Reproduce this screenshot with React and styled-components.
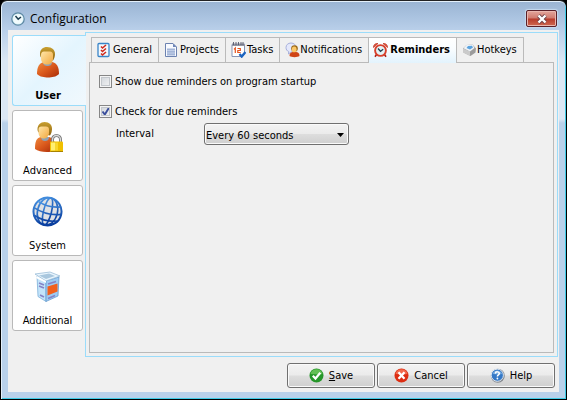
import React, { useState } from 'react';
import styled, { createGlobalStyle, css } from 'styled-components';

const GlobalStyle = createGlobalStyle`
  * {
    box-sizing: border-box;
  }

  body {
    margin: 0;
    background: #000;
    color: #000;
    font-family: 'DejaVu Sans Condensed', 'Noto Sans', sans-serif;
    font-size: 11px;
  }

  button,
  select {
    font: inherit;
    color: inherit;
  }
`;

/* ---------- icons ---------- */

const PersonDefs = ({ id }) => (
  <defs>
    <linearGradient id={`${id}-body`} x1="0" y1="0" x2="1" y2="1">
      <stop offset="0" stopColor="#f08a3c" />
      <stop offset="0.5" stopColor="#d9581c" />
      <stop offset="1" stopColor="#a82c08" />
    </linearGradient>
    <linearGradient id={`${id}-face`} x1="0" y1="0" x2="1" y2="1">
      <stop offset="0" stopColor="#ffe6a8" />
      <stop offset="1" stopColor="#f2a83e" />
    </linearGradient>
    <linearGradient id={`${id}-hair`} x1="0" y1="0" x2="0" y2="1">
      <stop offset="0" stopColor="#c9a030" />
      <stop offset="1" stopColor="#8f6410" />
    </linearGradient>
  </defs>
);

const UserIcon = () => (
  <svg width="32" height="32" viewBox="0 0 32 32" aria-hidden="true">
    <PersonDefs id="user" />
    <path d="M5 28c0-7 2-11 7-12h8c5 1 7 5 7 12-3 3-7 3.400-11 3.400S8 31 5 28z" fill="url(#user-body)" />
    <path d="M11 16h9c0 3-2 4-4.500 4S11 19 11 16z" fill="#8fa3b4" />
    <path d="M8 7.500C8 3.500 11 1 15 1c5 0 8 3 8 7 0 3-1 5-2 6.500L10 12.500C8.500 11.500 8 9.500 8 7.500z" fill="url(#user-hair)" />
    <path d="M9 9c0-2 1-3.500 3-3.500h6c2 0 3 1.500 3 3.500v3c0 4-2 6.500-6 6.500S9 16 9 12z" fill="url(#user-face)" />
  </svg>
);

const AdvancedIcon = () => (
  <svg width="32" height="32" viewBox="0 0 32 32" aria-hidden="true">
    <PersonDefs id="adv" />
    <path d="M3 28c0-7 1-11 6-12h8c4 1 6 4 6 9v5c-6 1.500-16 1.500-20-2z" fill="url(#adv-body)" />
    <path d="M9 16h8c0 3-2 4-4 4s-4-1-4-4z" fill="#8fa3b4" />
    <path d="M5.500 8c0-4 3-7 7-7 5 0 7.500 3 7.500 7 0 3-1 5-2 6.500L7.500 12C6 11 5.500 10 5.500 8z" fill="url(#adv-hair)" />
    <path d="M6.500 8.500c0-2 1-3 3-3h4.500c2 0 3 1 3 3V11c0 4-2 6.500-5.300 6.500S6.500 15 6.500 11z" fill="url(#adv-face)" />
    <path d="M20.500 22v-3.500a4 4 0 0 1 8 0V22" fill="none" stroke="#777" strokeWidth="3" />
    <path d="M20.500 22v-3.500a4 4 0 0 1 8 0V22" fill="none" stroke="#d8d8d8" strokeWidth="1.300" />
    <rect x="18" y="20.500" width="13" height="10.500" rx="1" fill="#f0c000" />
    <path d="M19 21.500h4v8h-4z" fill="#ffef70" />
    <path d="M23 21.500h3v8h-3z" fill="#f9d72c" />
    <path d="M18 30h13v1H19z" fill="#a88200" />
  </svg>
);

const GlobeIcon = () => (
  <svg width="32" height="32" viewBox="0 0 32 32" aria-hidden="true">
    <defs>
      <linearGradient id="globe-line" x1="0" y1="0" x2="0.6" y2="1">
        <stop offset="0" stopColor="#4c9ae8" />
        <stop offset="1" stopColor="#0a3fa0" />
      </linearGradient>
    </defs>
    <circle cx="15.500" cy="15.500" r="14" fill="#dfe1e4" />
    <g fill="none" stroke="url(#globe-line)" strokeWidth="1.600" transform="rotate(14 15.500 15.500)">
      <circle cx="15.500" cy="15.500" r="14" strokeWidth="2" />
      <ellipse cx="15.500" cy="15.500" rx="4" ry="14" />
      <ellipse cx="15.500" cy="15.500" rx="10" ry="14" />
      <path d="M4 8q11.500 4 23 0M1.500 15q14 5 28 0M4 22.500q11.500 4 23 0" />
    </g>
    <path d="M4 24c6 5 17 5 23 0-5 7-18 7-23 0z" fill="#0a3fa0" />
  </svg>
);

const BoxIcon = () => (
  <svg width="32" height="32" viewBox="0 0 32 32" aria-hidden="true">
    <path d="M5 5l9 5v20.500l-8-5z" fill="#c3e4fa" stroke="#6fa6d4" strokeWidth=".7" />
    <path d="M14 10l13-4-1 19-12 5.500z" fill="#9dcbf2" stroke="#5d93c8" strokeWidth=".7" />
    <path d="M3 3l15-2 10 4-14 5z" fill="#e9f5fd" stroke="#8fb4d2" strokeWidth=".7" />
    <path d="M7 4.500l10-2 6 2.500-9 3z" fill="#a9c7de" />
    <path d="M5 5l9 5v2L4 7z" fill="#fff" />
    <path d="M15.500 15.500l10-3v8l-10 4z" fill="#f2601c" />
    <path d="M16 13l8-2.500M7 12l5 2M7 15l5 2M8 24l4 2M16 27.500l7-3" stroke="#8583c6" strokeWidth="1.800" />
  </svg>
);

const ClockIcon = () => (
  <svg width="14" height="14" viewBox="0 0 14 14" aria-hidden="true">
    <circle cx="7" cy="7" r="6.200" fill="#d9f1f8" stroke="#5d88a3" strokeWidth="1.200" />
    <circle cx="7" cy="7" r="4.800" fill="#f2fbfd" />
    <path d="M4.500 4l2.700 3.200L10 5" fill="none" stroke="#1d3d50" strokeWidth="1.500" />
  </svg>
);

const ChecklistIcon = () => (
  <svg width="14" height="16" viewBox="0 0 14 16" aria-hidden="true">
    <rect x="1" y="1.500" width="11" height="13" rx="1" fill="#f3f8fd" stroke="#3a85c8" strokeWidth="1.300" />
    <path d="M4 4.500L5.500 6 9 3M4 8l1.500 1.500L9 6.500M4 11.500L5.500 13 9 10" fill="none" stroke="#d02a1c" strokeWidth="1.600" />
  </svg>
);

const DocumentIcon = () => (
  <svg width="14" height="16" viewBox="0 0 14 16" aria-hidden="true">
    <path d="M1.500 1.500h7.500l3.500 3.500v9.500h-11z" fill="#f8faff" stroke="#6c82b0" />
    <path d="M9 1.500V5h3.500z" fill="#6e86b8" />
    <path d="M3 6.500h8v7H3z" fill="#a4b6d8" />
    <path d="M3 8.500h8M3 11h8" stroke="#c2cfe8" />
  </svg>
);

const CalendarIcon = () => (
  <svg width="15" height="16" viewBox="0 0 15 16" aria-hidden="true">
    <path d="M1 2.500h12.500v10l-2 2H1z" fill="#fff" stroke="#8794b4" />
    <path d="M1 1.500h12.500V4H1z" fill="#9295a4" />
    <path d="M2.500 0v3M5 0v3M7.500 0v3M10 0v3M12 0v3" stroke="#555a6c" strokeWidth=".9" />
    <path d="M3 7.300L4.300 6v5M6.500 6.500h2.800v2H6.800v2h2.900" fill="none" stroke="#e5531c" strokeWidth="1.200" />
    <path d="M8.500 12l2.200 2.600L14.500 10" fill="none" stroke="#1c64c0" strokeWidth="2.300" />
  </svg>
);

const NotifyIcon = () => (
  <svg width="15" height="16" viewBox="0 0 15 16" aria-hidden="true">
    <path d="M1 5.500C1 3 3 1 6 1s5 2 5 4.500S9 10 6 10l-2.500 2 .2-2.500C2 9 1 7.500 1 5.500z" fill="#e4e8fb" stroke="#a7b0dc" />
    <path d="M4.500 14c0-3 1.500-4 3.500-4h3c2 0 3.500 1 3.500 4-2 1.500-8 1.500-10 0z" fill="#cf4416" />
    <circle cx="9.500" cy="6.500" r="3.300" fill="#9c6a18" />
    <ellipse cx="9.200" cy="7.400" rx="2.400" ry="2.900" fill="#fbc767" />
  </svg>
);

const AlarmIcon = () => (
  <svg width="15" height="16" viewBox="0 0 15 16" aria-hidden="true">
    <path d="M3.500 12.500L2 14.800M11.500 12.500l1.500 2.300" stroke="#a82418" strokeWidth="1.600" />
    <path d="M.5 5.500C.3 3 2 1.200 5 1.500zM14.500 5.500c.2-2.500-1.500-4.300-4.500-4z" fill="#e8563c" stroke="#b92e1c" strokeWidth=".7" />
    <circle cx="7.500" cy="8.500" r="5.400" fill="#e3f3f6" stroke="#d8402c" strokeWidth="1.900" />
    <path d="M5 6.500l2.500 2.800 2.700-2" fill="none" stroke="#24414e" strokeWidth="1.300" />
  </svg>
);

const KeyIcon = () => (
  <svg width="15" height="16" viewBox="0 0 15 16" aria-hidden="true">
    <path d="M4.500 3l6-.5 3.500 4-.5 4-5 3.500-7-3.500-.5-4z" fill="#9b9b9b" />
    <path d="M1 6.500l7 3v4.500l-7-3.500z" fill="#cacaca" />
    <path d="M4.500 3l6-.5L12.500 6 8 9.500 1.500 6.300z" fill="#eff3f7" />
    <path d="M6 4l4-.3L11 5.500 8 7.500 4.500 6z" fill="#5aa2de" />
  </svg>
);

const SaveIcon = () => (
  <svg width="15" height="15" viewBox="0 0 15 15" aria-hidden="true">
    <circle cx="7.500" cy="7.500" r="7" fill="#26962a" />
    <path d="M1.500 6a6.200 6.200 0 0 1 12 0c-3 1-8 0-12 0z" fill="#62bf55" />
    <path d="M3.800 7.700l2.700 2.800 4.800-5.700" fill="none" stroke="#fff" strokeWidth="2.200" />
  </svg>
);

const CancelIcon = () => (
  <svg width="15" height="15" viewBox="0 0 15 15" aria-hidden="true">
    <circle cx="7.500" cy="7.500" r="7" fill="#dc2d12" />
    <path d="M1.500 6a6.200 6.200 0 0 1 12 0c-3 1-8 0-12 0z" fill="#f2694c" />
    <path d="M4.500 4.300l6 6.400M10.500 4.300l-6 6.400" stroke="#fff" strokeWidth="2.300" />
  </svg>
);

const HelpIcon = () => (
  <svg width="15" height="15" viewBox="0 0 15 15" aria-hidden="true">
    <circle cx="7.800" cy="7.800" r="7" fill="#85898f" />
    <circle cx="7.300" cy="7.200" r="6.100" fill="#3578c6" stroke="#dfe8f2" />
    <path d="M2.500 6a5 5 0 0 1 9.600 0c-3 1-6 0-9.600 0z" fill="#75abe2" />
    <path d="M5.300 5.600c.2-2.400 4-2.200 4 0 0 1.400-1.900 1.300-1.900 3" fill="none" stroke="#fff" strokeWidth="1.500" />
    <circle cx="7.400" cy="10.500" r=".9" fill="#fff" />
  </svg>
);

const CloseIcon = () => (
  <svg width="12" height="10" viewBox="0 0 12 10" aria-hidden="true">
    <path d="M2.500 1.500l7 7M9.500 1.500l-7 7" stroke="#6b4248" strokeWidth="4" />
    <path d="M2.500 1.500l7 7M9.500 1.500l-7 7" stroke="#fff" strokeWidth="2.400" />
  </svg>
);

/* ---------- window frame ---------- */

const Window = styled.div`
  display: flex;
  flex-direction: column;
  min-height: 100vh;
  padding: 0 7px 7px;
  border: 1px solid #000;
  border-top-color: #222;
  border-radius: 7px 7px 0 0;
  background: linear-gradient(#9ab4d2, #a9c2df 15px, #bad0ea 30px, #dbe7f4 60px, #dbe7f4 118px, #b9d1ea 122px);
  box-shadow: inset 1px 0 #e4f0fa, inset 0 1px #e4f0fa, inset -1px -1px #3fcbe6;
`;

const TitleBar = styled.header`
  display: flex;
  align-items: center;
  gap: 5px;
  height: 29px;
  padding: 6px 2px 0 3px;
`;

const Title = styled.h1`
  flex: 1;
  margin: 0;
  font-family: 'Open Sans', 'Noto Sans', sans-serif;
  font-size: 12px;
  font-weight: 400;
`;

const CloseButton = styled.button`
  display: flex;
  align-items: center;
  justify-content: center;
  width: 31px;
  height: 17px;
  padding: 0;
  border: 1px solid #5b2028;
  border-radius: 2px;
  background: linear-gradient(#e3a69c, #d07a6e 48%, #b73a2a 52%, #cf6a52);
  box-shadow: inset 0 0 0 1px #e9b6ae, 0 0 1px 1px #c6daee;
`;

const Client = styled.div`
  flex: 1;
  display: flex;
  flex-direction: column;
  background: #f0f0f0;
`;

const Main = styled.main`
  flex: 1;
  display: flex;
  padding: 2px 1px 0 4px;
`;

/* ---------- left navigation ---------- */

const Sidebar = styled.nav`
  display: flex;
  flex-direction: column;
  gap: 4px;
  width: 73px;
  padding-top: 3px;
`;

const NavButton = styled.button`
  display: flex;
  flex-direction: column;
  align-items: center;
  gap: 10px;
  width: 71px;
  height: 71px;
  padding: 10px 0 0;
  border: 1px solid #b9b9b9;
  border-radius: 3px;
  background: #fff;
  line-height: 16px;

  ${({ $active }) =>
    $active &&
    css`
      position: relative;
      width: 74px;
      padding-right: 3px;
      border-color: #9bdcfa;
      border-right: 0;
      border-radius: 3px 0 0 3px;
      background: linear-gradient(135deg, #fff, #e4f5fe 50%, #f1f8fd);
      font-weight: 700;
    `}
`;

/* ---------- tabs ---------- */

const Content = styled.section`
  flex: 1;
  display: flex;
  flex-direction: column;
  padding: 4px 3px 3px;
  border: 1px solid #9bdcfa;
`;

const TabList = styled.div`
  display: flex;
  padding-left: 2px;
`;

const Tab = styled.button`
  display: flex;
  align-items: center;
  gap: ${({ $gap }) => $gap}px;
  height: 25px;
  padding: 0 6px 1px 5px;
  border: 1px solid #bababa;
  border-width: 1px 0 0 1px;
  background: #f0f0f0;
  white-space: nowrap;

  &:last-child {
    border-right-width: 1px;
  }

  ${({ $active }) =>
    $active &&
    css`
      position: relative;
      margin-bottom: -1px;
      height: 26px;
      padding: 0 6px 2px 4px;
      background: linear-gradient(#fff, #fafdff 40%, #e3f3fd);
      font-weight: 700;
    `}
`;

const TabPanel = styled.div`
  flex: 1;
  padding: 10px 9px;
  border: 1px solid #bababa;
`;

/* ---------- form ---------- */

const CheckRow = styled.label`
  display: flex;
  align-items: center;
  gap: 3px;
  height: 16px;
  margin-bottom: 14px;
`;

const Checkbox = styled.input`
  appearance: none;
  width: 13px;
  height: 13px;
  margin: 0;
  border: 1px solid #868686;
  background: linear-gradient(135deg, #cdd2d8, #f6f6f6);
  box-shadow: inset 0 0 0 1px #f4f4f4, inset 0 0 0 2px #c3c7cc;

  &:checked {
    background: url("data:image/svg+xml,%3Csvg xmlns='http://www.w3.org/2000/svg' viewBox='0 0 11 11'%3E%3Cpath d='M2.500 5.500l2.300 3 4-6.500' fill='none' stroke='%233a4e9c' stroke-width='1.900'/%3E%3C/svg%3E"),
      linear-gradient(135deg, #cdd2d8, #f6f6f6);
  }
`;

const IntervalRow = styled.div`
  display: flex;
  align-items: flex-start;
  gap: 8px;
  margin-top: -10px;
  padding-left: 17px;
`;

const IntervalLabel = styled.label`
  width: 80px;
  line-height: 16px;
  padding-top: 3px;
`;

const SelectWrap = styled.div`
  position: relative;
  width: 145px;
`;

const Select = styled.select`
  appearance: none;
  display: block;
  width: 100%;
  height: 22px;
  padding: 2px 18px 0 1px;
  border: 1px solid #707070;
  border-radius: 3px;
  background: linear-gradient(#f3f3f3, #ebebeb 48%, #dddddd 52%, #cfcfcf);
  box-shadow: inset 0 0 0 1px #fafafa;
`;

const SelectArrow = styled.svg`
  position: absolute;
  top: 10px;
  right: 5px;
  pointer-events: none;
`;

/* ---------- footer ---------- */

const Footer = styled.footer`
  display: flex;
  justify-content: flex-end;
  gap: 2px;
  padding: 6px 4px 4px;
`;

const ActionButton = styled.button`
  display: flex;
  align-items: center;
  justify-content: center;
  gap: 5px;
  width: 88px;
  height: 25px;
  padding: 0;
  border: 1px solid #707070;
  border-radius: 3px;
  background: linear-gradient(#f3f3f3, #ebebeb 48%, #dddddd 52%, #cfcfcf);
  box-shadow: inset 0 0 0 1px #fafafa;
`;

const navItems = [
  { name: 'User', Icon: UserIcon },
  { name: 'Advanced', Icon: AdvancedIcon },
  { name: 'System', Icon: GlobeIcon },
  { name: 'Additional', Icon: BoxIcon },
];

const tabs = [
  { name: 'General', Icon: ChecklistIcon, gap: 2 },
  { name: 'Projects', Icon: DocumentIcon, gap: 2 },
  { name: 'Tasks', Icon: CalendarIcon, gap: 1 },
  { name: 'Notifications', Icon: NotifyIcon, gap: 0 },
  { name: 'Reminders', Icon: AlarmIcon, gap: 2 },
  { name: 'Hotkeys', Icon: KeyIcon, gap: 0 },
];

const App = () => {
  const [section, setSection] = useState('User');
  const [tab, setTab] = useState('Reminders');
  const [onStartup, setOnStartup] = useState(false);
  const [checkDue, setCheckDue] = useState(true);
  const [interval, setIntervalValue] = useState('60');

  return (
    <>
      <GlobalStyle />
      <Window>
        <TitleBar>
          <ClockIcon />
          <Title>Configuration</Title>
          <CloseButton aria-label="Close">
            <CloseIcon />
          </CloseButton>
        </TitleBar>
        <Client>
          <Main>
            <Sidebar>
              {navItems.map(({ name, Icon }) => (
                <NavButton key={name} $active={name === section} onClick={() => setSection(name)}>
                  <Icon />
                  {name}
                </NavButton>
              ))}
            </Sidebar>
            <Content>
              <TabList role="tablist">
                {tabs.map(({ name, Icon, gap }) => (
                  <Tab
                    key={name}
                    role="tab"
                    aria-selected={name === tab}
                    $active={name === tab}
                    $gap={gap}
                    onClick={() => setTab(name)}
                  >
                    <Icon />
                    {name}
                  </Tab>
                ))}
              </TabList>
              <TabPanel role="tabpanel">
                <CheckRow>
                  <Checkbox type="checkbox" checked={onStartup} onChange={(e) => setOnStartup(e.target.checked)} />
                  Show due reminders on program startup
                </CheckRow>
                <CheckRow>
                  <Checkbox type="checkbox" checked={checkDue} onChange={(e) => setCheckDue(e.target.checked)} />
                  Check for due reminders
                </CheckRow>
                <IntervalRow>
                  <IntervalLabel htmlFor="interval">Interval</IntervalLabel>
                  <SelectWrap>
                    <Select id="interval" value={interval} onChange={(e) => setIntervalValue(e.target.value)}>
                      <option value="30">Every 30 seconds</option>
                      <option value="60">Every 60 seconds</option>
                    </Select>
                    <SelectArrow width="7" height="4" viewBox="0 0 7 4" aria-hidden="true">
                      <path d="M0 0h7L3.500 4z" />
                    </SelectArrow>
                  </SelectWrap>
                </IntervalRow>
              </TabPanel>
            </Content>
          </Main>
          <Footer>
            <ActionButton>
              <SaveIcon />
              <span>
                <u>S</u>ave
              </span>
            </ActionButton>
            <ActionButton>
              <CancelIcon />
              Cancel
            </ActionButton>
            <ActionButton>
              <HelpIcon />
              Help
            </ActionButton>
          </Footer>
        </Client>
      </Window>
    </>
  );
};

export default App;
